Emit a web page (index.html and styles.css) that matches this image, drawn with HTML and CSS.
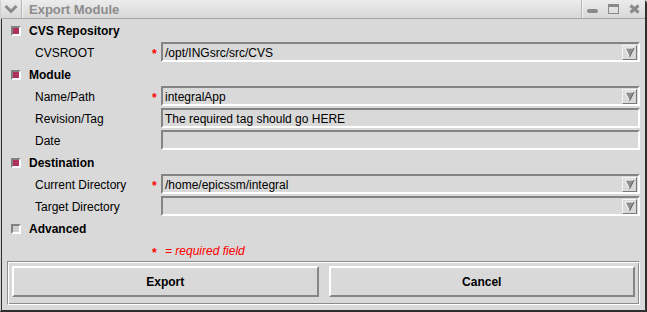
FILE: index.html
```html
<!DOCTYPE html>
<html lang="en">
<head>
    <meta charset="UTF-8">
    <title>Export Module</title>
    <link rel="stylesheet" href="styles.css">
</head>
<body>
    <div class="window">
        <div class="titlebar">
            <div class="menu-btn">
                <svg width="14" height="10" viewBox="0 0 14 10">
                    <path d="M1.5 2 L7 7.5 L12.5 2" fill="none" stroke="#8a8a8a" stroke-width="3"/>
                </svg>
            </div>
            <div class="title">Export Module</div>
            <div class="controls">
                <svg width="11" height="10" viewBox="0 0 11 10">
                    <rect x="0" y="5" width="11" height="4" rx="2" fill="#8a8a8a"/>
                </svg>
                <svg width="11" height="10" viewBox="0 0 11 10">
                    <rect x="0.5" y="0.5" width="10" height="9" fill="none" stroke="#8a8a8a"/>
                    <rect x="0" y="0" width="11" height="3" fill="#8a8a8a"/>
                </svg>
                <svg width="11" height="10" viewBox="0 0 11 10">
                    <path d="M1.5 1.5 L9.5 8.5 M9.5 1.5 L1.5 8.5" stroke="#8a8a8a" stroke-width="3"/>
                </svg>
            </div>
        </div>

        <div class="content">
            <form class="form">
                <div class="section"><span class="check on"></span>CVS Repository</div>
                <div class="field">
                    <label>CVSROOT</label><span class="req">*</span>
                    <div class="entry combo"><span class="value">/opt/INGsrc/src/CVS</span><span class="arrow"><svg width="11" height="11" viewBox="0 0 11 11"><polygon points="1,1 10,1 5.5,10" fill="#8e8e8e"/><path d="M1 1 L10 1 M1 1 L5.5 10" stroke="#fff" fill="none"/><path d="M10 1 L5.5 10" stroke="#5e5e5e" fill="none"/></svg></span></div>
                </div>

                <div class="section"><span class="check on"></span>Module</div>
                <div class="field">
                    <label>Name/Path</label><span class="req">*</span>
                    <div class="entry combo"><span class="value">integralApp</span><span class="arrow"><svg width="11" height="11" viewBox="0 0 11 11"><polygon points="1,1 10,1 5.5,10" fill="#8e8e8e"/><path d="M1 1 L10 1 M1 1 L5.5 10" stroke="#fff" fill="none"/><path d="M10 1 L5.5 10" stroke="#5e5e5e" fill="none"/></svg></span></div>
                </div>
                <div class="field">
                    <label>Revision/Tag</label><span class="req"></span>
                    <div class="entry"><span class="value">The required tag should go HERE</span></div>
                </div>
                <div class="field">
                    <label>Date</label><span class="req"></span>
                    <div class="entry"><span class="value"></span></div>
                </div>

                <div class="section"><span class="check on"></span>Destination</div>
                <div class="field">
                    <label>Current Directory</label><span class="req">*</span>
                    <div class="entry combo"><span class="value">/home/epicssm/integral</span><span class="arrow"><svg width="11" height="11" viewBox="0 0 11 11"><polygon points="1,1 10,1 5.5,10" fill="#8e8e8e"/><path d="M1 1 L10 1 M1 1 L5.5 10" stroke="#fff" fill="none"/><path d="M10 1 L5.5 10" stroke="#5e5e5e" fill="none"/></svg></span></div>
                </div>
                <div class="field">
                    <label>Target Directory</label><span class="req"></span>
                    <div class="entry combo"><span class="value"></span><span class="arrow"><svg width="11" height="11" viewBox="0 0 11 11"><polygon points="1,1 10,1 5.5,10" fill="#8e8e8e"/><path d="M1 1 L10 1 M1 1 L5.5 10" stroke="#fff" fill="none"/><path d="M10 1 L5.5 10" stroke="#5e5e5e" fill="none"/></svg></span></div>
                </div>

                <div class="section"><span class="check"></span>Advanced</div>
                <div class="field legend">
                    <label></label><span class="req">*</span>
                    <span class="note">= required field</span>
                </div>
            </form>

            <div class="actions">
                <button type="button">Export</button>
                <button type="button">Cancel</button>
            </div>
        </div>
    </div>
</body>
</html>
```

FILE: styles.css
```css
* {
    margin: 0;
    padding: 0;
    box-sizing: border-box;
}

body {
    background: #d9d9d9;
    font-family: "Liberation Sans", Arial, sans-serif;
    font-size: 12px;
    color: #000;
}

.window {
    width: 647px;
    height: 312px;
    display: flex;
    flex-direction: column;
    background: #d9d9d9;
    border-left: 1px solid #cfcfcf;
    border-right: 2px solid #2e2e2e;
    border-bottom: 2px solid #2e2e2e;
    border-radius: 3px 4px 0 0;
}

/* title bar */
.titlebar {
    height: 20px;
    display: flex;
    align-items: center;
    background: linear-gradient(#ececec, #d8d8d8);
    border-bottom: 1px solid #a4a4a4;
}

.menu-btn {
    width: 21px;
    height: 100%;
    display: flex;
    align-items: center;
    justify-content: center;
    border-right: 1px solid #b4b4b4;
    box-shadow: 1px 0 0 #f4f4f4;
}

.title {
    flex: 1;
    padding-left: 7px;
    font-size: 13px;
    font-weight: bold;
    color: #8c8c8c;
}

.controls {
    height: 100%;
    display: flex;
    align-items: center;
    gap: 10px;
    padding: 0 5px 0 5px;
    border-left: 1px solid #b4b4b4;
    box-shadow: inset 1px 0 0 #f4f4f4;
}

/* main area */
.content {
    flex: 1;
    display: flex;
    flex-direction: column;
    border-left: 1px solid #2e2e2e;
    padding-bottom: 5px;
}

.form {
    display: flex;
    flex-direction: column;
}

.section {
    height: 22px;
    display: flex;
    align-items: center;
    padding: 2px 0 0 9px;
    font-weight: bold;
}

.check {
    width: 10px;
    height: 10px;
    margin-right: 8px;
    background: #cfcfcf;
    border: 2px solid;
    border-color: #828282 #fff #fff #828282;
}

.check.on {
    background: #b03060;
}

.field {
    height: 22px;
    display: grid;
    grid-template-columns: 150px 9px 1fr;
    align-items: center;
    padding-right: 5px;
}

.field label {
    padding: 2px 0 0 33px;
}

.req {
    color: #f00;
    font-weight: bold;
    align-self: start;
    padding-top: 6px;
}

.entry {
    height: 20px;
    display: flex;
    align-items: center;
    padding: 0 1px 0 2px;
    border: 2px solid;
    border-color: #848484 #fff #fff #848484;
}

.entry .value {
    flex: 1;
    padding-top: 1px;
    white-space: nowrap;
}

.arrow {
    width: 15px;
    height: 15px;
    display: flex;
    align-items: center;
    justify-content: center;
    border: 1px solid;
    border-color: #f6f6f6 #7a7a7a #7a7a7a #f6f6f6;
}

.note {
    color: #f00;
    font-style: italic;
    padding: 2px 0 0 4px;
}

.legend .req {
    padding-top: 7px;
}

/* button box */
.actions {
    height: 44px;
    margin: 0 5px;
    display: flex;
    gap: 10px;
    padding: 4px 4px 5px 4px;
    border: 1px solid;
    border-color: #8c8c8c #fff #fff #8c8c8c;
    box-shadow: inset 1px 1px 0 #fff, inset -1px -1px 0 #8c8c8c;
}

.actions button {
    flex: 1;
    height: 31px;
    font-family: inherit;
    font-size: 12px;
    font-weight: bold;
    color: #000;
    background: #d9d9d9;
    border: 2px solid;
    border-color: #fff #868686 #868686 #fff;
}
```
